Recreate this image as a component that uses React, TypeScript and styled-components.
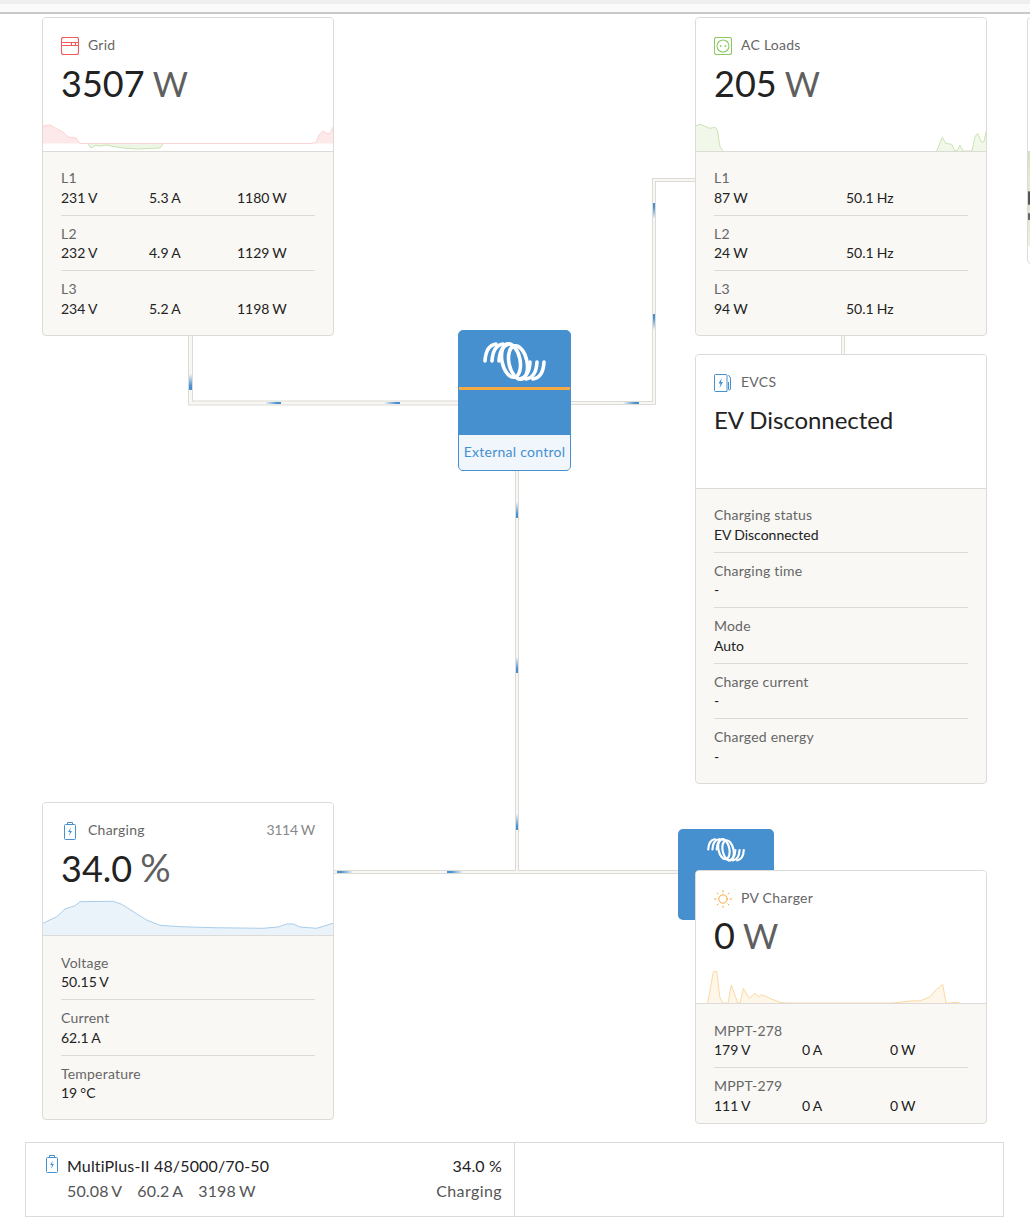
import React from 'react';
import styled, { createGlobalStyle } from 'styled-components';

const GlobalStyle = createGlobalStyle`
  html, body {
    margin: 0;
    background: #fff;
    font-family: 'Lato', 'Open Sans', sans-serif;
    color: #222;
  }
  * { box-sizing: border-box; }
`;

const WIRE_PATHS = [
  { d: 'M190.5 322 V389 H460', outer: 5, inner: 3 },
  { d: 'M570 389 H654 V166 H696', outer: 4, inner: 2 },
  { d: 'M843 321 V341', outer: 4, inner: 2 },
  { d: 'M517 456 V858', outer: 4, inner: 2 },
  { d: 'M334 858 H680', outer: 4, inner: 2 },
];

// y values are relative to the canvas, which starts below the top bar
const PULSES: { x: number; y: number; dir: 'bottom' | 'right' | 'left' | 'top'; size?: number }[] = [
  { x: 189, y: 360, dir: 'bottom', size: 3 },
  { x: 265, y: 388, dir: 'right' },
  { x: 384, y: 388, dir: 'right' },
  { x: 623, y: 388, dir: 'right' },
  { x: 653, y: 300, dir: 'top' },
  { x: 653, y: 189, dir: 'top' },
  { x: 516, y: 488, dir: 'bottom' },
  { x: 516, y: 643, dir: 'bottom' },
  { x: 516, y: 800, dir: 'bottom' },
  { x: 337, y: 857, dir: 'left' },
  { x: 447, y: 857, dir: 'left' },
];

const Page = styled.div`
  width: 1030px;
  height: 1218px;
  overflow: hidden;
`;

const TopBar = styled.div`
  height: 14px;
  background: #fafafa;
  border-top: 4px solid #eeeeee;
  border-bottom: 2px solid #c9c9c9;
`;

const Canvas = styled.div`
  position: relative;
  height: 1128px;
`;

const Wires = styled.svg`
  position: absolute;
  left: 0;
  top: 0;
`;

const Pulse = styled.div<{ $x: number; $y: number; $dir: string; $size: number }>`
  position: absolute;
  left: ${(p) => p.$x}px;
  top: ${(p) => p.$y}px;
  width: ${(p) => (p.$dir === 'right' || p.$dir === 'left' ? '16px' : `${p.$size}px`)};
  height: ${(p) => (p.$dir === 'right' || p.$dir === 'left' ? `${p.$size}px` : '16px')};
  background: linear-gradient(to ${(p) => p.$dir}, rgba(71, 144, 208, 0), #4790d0 75%);
`;

const Card = styled.section<{ $x: number; $y: number; $h: number }>`
  position: absolute;
  left: ${(p) => p.$x}px;
  top: ${(p) => p.$y}px;
  width: 292px;
  height: ${(p) => p.$h}px;
  display: flex;
  flex-direction: column;
  background: #f9f8f5;
  border: 1px solid #dcdbd8;
  border-radius: 4px;
  overflow: hidden;
`;

const CardTop = styled.div<{ $h: number }>`
  height: ${(p) => p.$h}px;
  flex: none;
  display: flex;
  flex-direction: column;
  padding-top: 19px;
  background: #fff;
  border-bottom: 1px solid #dcdbd8;
`;

const TitleRow = styled.div`
  height: 18px;
  padding: 0 18px;
  display: flex;
  align-items: flex-start;
  gap: 9px;
  font-size: 14px;
  line-height: 16px;
  letter-spacing: 0.25px;
  color: #666;
`;

const BatterySlot = styled.span`
  display: block;
  height: 18px;
  margin: 0 3px;
`;

const SummaryIcon = styled.span`
  display: block;
  margin-top: 2px;
`;

const Aside = styled.span`
  margin-left: auto;
  color: #888;
  letter-spacing: -0.3px;
`;

const Value = styled.div<{ $small?: boolean; $lift?: boolean }>`
  margin-top: ${(p) => (p.$lift ? '5px' : '6px')};
  padding: 0 18px;
  height: 44px;
  line-height: 44px;
  font-size: ${(p) => (p.$small ? '24px' : '36px')};
  letter-spacing: ${(p) => (p.$small ? '-0.05px' : '0')};
  color: #222;
`;

const Unit = styled.span<{ $wide?: boolean }>`
  font-size: ${(p) => (p.$wide ? '38px' : '34px')};
  margin-left: -1px;
  color: #5f5f5f;
`;

const Graph = styled.svg`
  display: block;
  margin-top: auto;
  flex: none;
`;

const CardBody = styled.div<{ $top: number }>`
  flex: 1;
  padding: ${(p) => p.$top}px 18px 0;
`;

const Row = styled.div`
  padding: 8px 0 7.5px;
  & + & {
    border-top: 1px solid #dcdbd8;
  }
`;

const RowLabel = styled.div`
  font-size: 14px;
  line-height: 19.5px;
  letter-spacing: 0.2px;
  color: #666;
`;

const RowValues = styled.div<{ $cols: number }>`
  display: grid;
  grid-template-columns: ${(p) => (p.$cols === 3 ? '88px 88px 1fr' : p.$cols === 2 ? '132px 1fr' : '1fr')};
  font-size: 14px;
  line-height: 19.5px;
  word-spacing: -0.5px;
  color: #222;
`;

const Inverter = styled.div`
  position: absolute;
  left: 458px;
  top: 316px;
  width: 113px;
  height: 141px;
  display: flex;
  flex-direction: column;
  background: #4790d0;
  border: 1px solid #4790d0;
  border-radius: 5px;
  overflow: hidden;
`;

const InverterLogo = styled.div`
  height: 59px;
  flex: none;
  display: flex;
  justify-content: center;
  padding-top: 11px;
  border-bottom: 3px solid #f4ab45;
`;

const InverterLabel = styled.div`
  margin-top: auto;
  height: 35px;
  line-height: 34px;
  text-align: center;
  font-size: 14px;
  letter-spacing: 0.25px;
  color: #4790d0;
  background: #f0f6fb;
  white-space: nowrap;
`;

const Charger = styled.div`
  position: absolute;
  left: 678px;
  top: 815px;
  width: 96px;
  height: 91px;
  display: flex;
  justify-content: center;
  padding-top: 9px;
  background: #4790d0;
  border-radius: 5px;
`;

const EdgeCard = styled.div`
  position: absolute;
  left: 1027px;
  top: 3px;
  width: 60px;
  height: 247px;
  padding-top: 133px;
  background: #fff;
  border: 1px solid #dcdbd8;
  border-radius: 4px;
  overflow: hidden;
`;

const MapStrip = styled.div`
  height: 95px;
  background: linear-gradient(
    to bottom,
    #cfe0c0,
    #e3ecd4 30%,
    #dfe8d2 42%,
    #555 43%,
    #555 56%,
    #d9e6c8 57%,
    #dfe9cf 65%,
    #666 66%,
    #666 72%,
    #dfe9cf 73%,
    #eef2e4
  );
`;

const Summary = styled.div`
  display: flex;
  height: 75px;
  margin: 0 26px 0 25px;
  border: 1px solid #dcdbd8;
`;

const SummaryCell = styled.div`
  width: 489px;
  flex: none;
  display: flex;
  gap: 9px;
  padding: 10px 12px 0 20px;
  border-right: 1px solid #dcdbd8;
`;

const SummaryMain = styled.div`
  flex: 1;
`;

const SummaryLine = styled.div<{ $muted?: boolean }>`
  height: 25px;
  line-height: 25px;
  display: flex;
  justify-content: space-between;
  font-size: 16px;
  letter-spacing: 0.15px;
  color: ${(p) => (p.$muted ? '#555' : '#222')};
`;

const Readings = styled.span`
  display: flex;
  gap: 15px;
  word-spacing: -1px;
`;

const Status = styled.span`
  letter-spacing: 0.4px;
`;

const GridIcon = () => (
  <svg width="18" height="18" viewBox="0 0 18 18" fill="none" stroke="#f0585c" strokeWidth="1.1">
    <rect x="0.5" y="0.5" width="17" height="17" rx="2" />
    <path d="M0.5 5.5 H17.5 M0.5 8.5 H17.5 M10.5 5.5 V8.5 M14.5 5.5 V8.5" />
  </svg>
);

const SocketIcon = () => (
  <svg width="18" height="18" viewBox="0 0 18 18" fill="none" stroke="#8cc963" strokeWidth="1.1">
    <rect x="0.5" y="0.5" width="17" height="17" rx="2" />
    <circle cx="9" cy="9" r="6" />
    <circle cx="6.6" cy="9" r="0.9" fill="#8cc963" stroke="none" />
    <circle cx="11.4" cy="9" r="0.9" fill="#8cc963" stroke="none" />
  </svg>
);

const BatteryIcon = () => (
  <svg width="12" height="18" viewBox="0 0 12 18" fill="none" stroke="#4790d0" strokeWidth="1">
    <rect x="0.5" y="2.5" width="11" height="15" rx="1" />
    <path d="M3.5 2.5 V0.5 H8.5 V2.5" />
    <path d="M7 5.5 L4 10 H6 L5 14 L8 9 H6 Z" fill="#4790d0" stroke="none" />
  </svg>
);

const ChargerIcon = () => (
  <svg width="18" height="18" viewBox="0 0 18 18" fill="none" stroke="#4790d0" strokeWidth="1">
    <path d="M13 17.5 H1.5 A1 1 0 0 1 0.5 16.5 V1.5 A1 1 0 0 1 1.5 0.5 H12 A1 1 0 0 1 13 1.5 Z" />
    <path d="M7.8 4 L4.5 9.5 H6.5 L5.6 14 L9 8 H7 Z" fill="#4790d0" stroke="none" />
    <path d="M14.5 1 L16.5 4 V15 A1 1 0 0 1 14.5 15 V8" />
  </svg>
);

const SunIcon = () => (
  <svg width="18" height="18" viewBox="0 0 18 18" fill="none" stroke="#f5a93c" strokeWidth="1" strokeLinecap="round">
    <circle cx="9" cy="9" r="4.2" />
    <path d="M9 0.5 V2 M9 16 V17.5 M0.5 9 H2 M16 9 H17.5 M3 3 L4 4 M14 14 L15 15 M3 15 L4 14 M14 4 L15 3" />
  </svg>
);

const Logo = ({ width }: { width: number }) => {
  const arcs = ['M2 19 C2.5 10 6 3 13 2', 'M9 19 C9.5 10 13 3 20 2', 'M16 19 C16.5 10 20 3 27 2'];
  return (
    <svg width={width} height={(width * 39) / 63} viewBox="0 0 63 39" fill="none" stroke="#fff" strokeWidth="3.6" strokeLinecap="round">
      {arcs.map((d) => (
        <path key={d} d={d} />
      ))}
      {arcs.map((d) => (
        <path key={d} d={d} transform="rotate(180 31.5 19.5)" />
      ))}
      <ellipse cx="28" cy="18.5" rx="9" ry="17" transform="rotate(-12 28 18.5)" />
      <ellipse cx="35" cy="20.5" rx="9" ry="17" transform="rotate(-12 35 20.5)" />
    </svg>
  );
};

const area = (points: string, base: number) => {
  const first = points.split(' ')[0].split(',')[0];
  const last = points.split(' ').slice(-1)[0].split(',')[0];
  return `${first},${base} ${points} ${last},${base}`;
};

const GridGraph = () => {
  const red =
    '43,126 50,125 57,129 63,132 68,137 76,138 80,143.5 88,143.5 163,143.5 260,143.5 300,143.5 310,143.5 316,142.5 319,135 323,131 327,133.5 330,133.5 333,127';
  const green = '88,144 91,148 95,145.5 100,146 107,145 113,146.5 123,148 137,149 160,148 163,144';
  return (
    <Graph width="290" height="29" viewBox="43 122 290 29">
      <polygon points={area(red, 143.5)} fill="#fde9e9" />
      <polyline points={red} fill="none" stroke="#fbd3d3" />
      <polygon points={area(green, 144)} fill="#eff6e7" />
      <polyline points={green} fill="none" stroke="#cbe3b2" />
    </Graph>
  );
};

const AcGraph = () => {
  const left = '696,126 700,124.3 710,128.3 715,127.3 717.3,130 720,146.7 723,151';
  const right =
    '936.7,151 942.3,137.3 945.7,143.3 951.7,144.3 955,151 958,149.5 960,145.3 963,151 972,151 975,136.7 977.7,133.3 981,141.7 984,141.7 986,131.7';
  return (
    <Graph width="290" height="29" viewBox="696 122 290 29">
      <polygon points={area(left, 151)} fill="#f1f8ea" />
      <polyline points={left} fill="none" stroke="#cbe3b2" />
      <polygon points={area(right, 151)} fill="#f1f8ea" />
      <polyline points={right} fill="none" stroke="#cbe3b2" />
    </Graph>
  );
};

const BatteryGraph = () => {
  const line =
    '43,923.3 56.7,916.7 65,909 75,905.7 80,901.7 113.3,901.3 121.7,904.3 146.7,920 160,925.3 180,926.7 213,927.7 263,928.3 278,927 286.7,924 293.3,924 300,927 316.7,928.3 333,923.3';
  return (
    <Graph width="290" height="36" viewBox="43 899 290 36">
      <polygon points={area(line, 935)} fill="#ebf3fa" />
      <polyline points={line} fill="none" stroke="#a9cdea" />
    </Graph>
  );
};

const PvGraph = () => {
  const line =
    '707.7,1003 713.3,971.7 716.7,971.3 720,998 723.3,1003 728,1003 731.3,985 737.7,1003 740,1003 743.3,988.3 749.3,998.3 755,993.3 758.3,996.7 761.7,994.7 770,998.3 780,1002.3 786.7,1003 893,1003 913.3,1000.7 920,1001 930,996.7 935.7,990 942.7,984.3 946,1003 950,1003 955,1002.3 960,1003';
  return (
    <Graph width="290" height="36" viewBox="696 967 290 36">
      <polygon points={area(line, 1003)} fill="#fdf6e9" />
      <polyline points={line} fill="none" stroke="#fad9a3" />
    </Graph>
  );
};

const Stat = ({ number, unit, lift }: { number: string; unit: string; lift?: boolean }) => (
  <Value $lift={lift}>
    {number} <Unit $wide={unit === '%'}>{unit}</Unit>
  </Value>
);

const Rows = ({ rows, cols, top = 8 }: { rows: { label: string; values: string[] }[]; cols: number; top?: number }) => (
  <CardBody $top={top}>
    {rows.map((r) => (
      <Row key={r.label}>
        <RowLabel>{r.label}</RowLabel>
        <RowValues $cols={cols}>
          {r.values.map((v, i) => (
            <span key={i}>{v}</span>
          ))}
        </RowValues>
      </Row>
    ))}
  </CardBody>
);

export default function App() {
  return (
    <Page>
      <GlobalStyle />
      <TopBar />
      <Canvas>
        <Wires width="1030" height="1128">
          {WIRE_PATHS.map((w) => (
            <path key={w.d} d={w.d} fill="none" stroke="#dcdbd6" strokeWidth={w.outer} />
          ))}
          {WIRE_PATHS.map((w) => (
            <path key={w.d} d={w.d} fill="none" stroke="#f8f7f4" strokeWidth={w.inner} />
          ))}
        </Wires>
        {PULSES.map((p) => (
          <Pulse key={`${p.x}-${p.y}`} $x={p.x} $y={p.y} $dir={p.dir} $size={p.size ?? 2} />
        ))}

        <Card $x={42} $y={3} $h={319}>
          <CardTop $h={134}>
            <TitleRow>
              <GridIcon />
              Grid
            </TitleRow>
            <Stat number="3507" unit="W" />
            <GridGraph />
          </CardTop>
          <Rows
            cols={3}
            rows={[
              { label: 'L1', values: ['231 V', '5.3 A', '1180 W'] },
              { label: 'L2', values: ['232 V', '4.9 A', '1129 W'] },
              { label: 'L3', values: ['234 V', '5.2 A', '1198 W'] },
            ]}
          />
        </Card>

        <Card $x={695} $y={3} $h={319}>
          <CardTop $h={134}>
            <TitleRow>
              <SocketIcon />
              AC Loads
            </TitleRow>
            <Stat number="205" unit="W" />
            <AcGraph />
          </CardTop>
          <Rows
            cols={2}
            rows={[
              { label: 'L1', values: ['87 W', '50.1 Hz'] },
              { label: 'L2', values: ['24 W', '50.1 Hz'] },
              { label: 'L3', values: ['94 W', '50.1 Hz'] },
            ]}
          />
        </Card>

        <Card $x={695} $y={340} $h={430}>
          <CardTop $h={134}>
            <TitleRow>
              <ChargerIcon />
              EVCS
            </TitleRow>
            <Value $small>EV Disconnected</Value>
          </CardTop>
          <Rows
            cols={1}
            rows={[
              { label: 'Charging status', values: ['EV Disconnected'] },
              { label: 'Charging time', values: ['-'] },
              { label: 'Mode', values: ['Auto'] },
              { label: 'Charge current', values: ['-'] },
              { label: 'Charged energy', values: ['-'] },
            ]}
          />
        </Card>

        <Inverter>
          <InverterLogo>
            <Logo width={63} />
          </InverterLogo>
          <InverterLabel>External control</InverterLabel>
        </Inverter>

        <Card $x={42} $y={788} $h={318}>
          <CardTop $h={133}>
            <TitleRow>
              <BatterySlot>
                <BatteryIcon />
              </BatterySlot>
              Charging
              <Aside>3114 W</Aside>
            </TitleRow>
            <Stat number="34.0" unit="%" lift />
            <BatteryGraph />
          </CardTop>
          <Rows
            cols={1}
            top={8.5}
            rows={[
              { label: 'Voltage', values: ['50.15 V'] },
              { label: 'Current', values: ['62.1 A'] },
              { label: 'Temperature', values: ['19 °C'] },
            ]}
          />
        </Card>

        <Charger>
          <Logo width={38} />
        </Charger>

        <Card $x={695} $y={856} $h={254}>
          <CardTop $h={133}>
            <TitleRow>
              <SunIcon />
              PV Charger
            </TitleRow>
            <Stat number="0" unit="W" lift />
            <PvGraph />
          </CardTop>
          <Rows
            cols={3}
            top={8.5}
            rows={[
              { label: 'MPPT-278', values: ['179 V', '0 A', '0 W'] },
              { label: 'MPPT-279', values: ['111 V', '0 A', '0 W'] },
            ]}
          />
        </Card>

        <EdgeCard>
          <MapStrip />
        </EdgeCard>
      </Canvas>
      <Summary>
        <SummaryCell>
          <SummaryIcon>
            <BatteryIcon />
          </SummaryIcon>
          <SummaryMain>
            <SummaryLine>
              <span>MultiPlus-II 48/5000/70-50</span>
              <span>34.0 %</span>
            </SummaryLine>
            <SummaryLine $muted>
              <Readings>
                <span>50.08 V</span>
                <span>60.2 A</span>
                <span>3198 W</span>
              </Readings>
              <Status>Charging</Status>
            </SummaryLine>
          </SummaryMain>
        </SummaryCell>
      </Summary>
    </Page>
  );
}
